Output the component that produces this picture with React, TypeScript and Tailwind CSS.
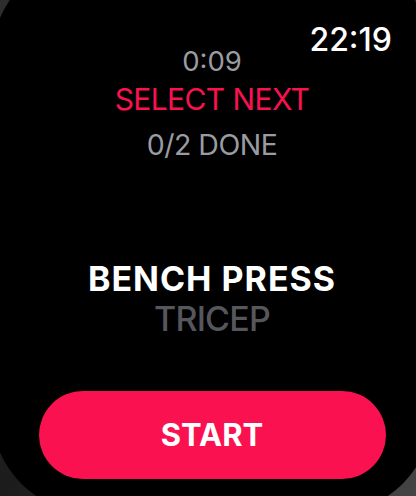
export default function App() {
  return (
    <div
      className="h-[496px] w-[416px] overflow-hidden bg-gradient-to-br from-[#2e2e2e] via-[#1c1c1c] to-[#444444]"
      style={{ fontFamily: "Inter, 'Noto Sans', sans-serif" }}
    >
      <div className="-ml-[8px] -mt-[43px] flex h-[556px] w-[440px] flex-col items-center rounded-[100px] bg-black pt-[67px]">
        <div className="flex w-full justify-end pr-[40px]">
          <span className="text-[32px] font-medium leading-none text-white">22:19</span>
        </div>
        <div className="-mt-[8px] text-[27.5px] leading-none text-[#9b9ca1]">0:09</div>
        <div className="mt-[8px] text-[30px] leading-none tracking-[-0.6px] text-[#fa114f]">SELECT NEXT</div>
        <div className="mt-[17.5px] text-[28.5px] leading-none tracking-[-0.5px] text-[#9b9ca1]">0/2 DONE</div>
        <div className="mt-[102.5px] text-[34px] font-bold leading-none tracking-[1px] text-white">BENCH PRESS</div>
        <div className="mt-[6px] text-[34px] font-medium leading-none tracking-[-0.8px] text-[#55575c]">TRICEP</div>
        <button className="mt-[54.6px] flex h-[88px] w-[347px] items-center justify-center rounded-full bg-[#fa114f] text-[31px] font-bold leading-none text-white">
          START
        </button>
      </div>
    </div>
  );
}
